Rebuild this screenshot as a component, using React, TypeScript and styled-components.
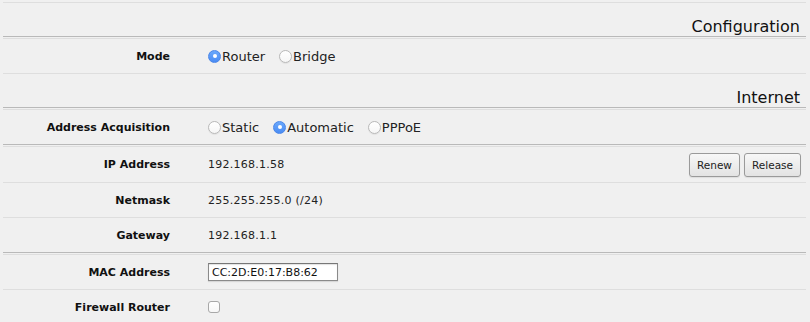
import React from "react";
import styled, { createGlobalStyle } from "styled-components";

const Global = createGlobalStyle`
  html, body { margin: 0; padding: 0; background: #f0f0f0; }
  body { font-family: "DejaVu Sans", Verdana, sans-serif; font-size: 11px; color: #111; }
`;

const Page = styled.div`
  padding: 2px 4px 0 3px;
  width: 100%;
  box-sizing: border-box;
`;

const Heading = styled.div`
  border-top: 1px solid #dedede;
  border-bottom: 1px solid #b9b9b9;
  margin-bottom: 1px;
  height: 33px;
  display: flex;
  justify-content: flex-end;
  align-items: flex-end;
  padding-right: 6px;
  font-size: 16px;
  line-height: 19px;
  color: #111;
`;

const Row = styled.div<{ $h?: number; $groupEnd?: boolean }>`
  border-top: 1px solid #dedede;
  ${(p) => (p.$groupEnd ? "border-bottom: 1px solid #b9b9b9; margin-bottom: 1px;" : "")}
  height: ${(p) => p.$h ?? 34}px;
  display: grid;
  grid-template-columns: 167px 1fr auto;
  column-gap: 38px;
  align-items: center;
`;

const Label = styled.div`
  font-weight: bold;
  text-align: right;
  color: #111;
`;

const Value = styled.div`
  display: flex;
  align-items: center;
  color: #222;
  letter-spacing: 0.25px;
`;

const RadioOpt = styled.label`
  display: inline-flex;
  align-items: center;
  margin-right: 14px;
  color: #222;
  font-size: 13px;
  letter-spacing: 0;
`;

const RadioDot = styled.span<{ $on?: boolean }>`
  width: 13px;
  height: 13px;
  box-sizing: border-box;
  border-radius: 50%;
  display: inline-flex;
  align-items: center;
  justify-content: center;
  margin-right: 1px;
  ${(p) =>
    p.$on
      ? `background: linear-gradient(#6aa8fb, #4a8cf4); border: 1px solid #4a86e8;`
      : `background: linear-gradient(#ffffff, #f6f6f6); border: 1px solid #b8b8b8; box-shadow: 0 1px 1px rgba(0,0,0,0.06);`}
  &::after {
    content: "";
    width: 4px;
    height: 4px;
    border-radius: 50%;
    background: #fff;
    display: ${(p) => (p.$on ? "block" : "none")};
  }
`;

const Buttons = styled.div`
  display: flex;
  gap: 4px;
  padding-right: 5px;
`;

const Button = styled.button`
  height: 24px;
  box-sizing: border-box;
  padding: 0 7px;
  font-family: "DejaVu Sans", Verdana, sans-serif;
  font-size: 10.5px;
  color: #222;
  background: linear-gradient(#f7f7f7, #e3e3e3);
  border: 1px solid #9a9a9a;
  border-radius: 3px;
  box-shadow: 0 1px 1px rgba(0, 0, 0, 0.08);
`;

const TextInput = styled.input`
  width: 130px;
  height: 18px;
  box-sizing: border-box;
  padding: 0 3px;
  font-family: "DejaVu Sans", Verdana, sans-serif;
  font-size: 11px;
  color: #111;
  background: #fff;
  border: 1px solid #8a8a8a;
  border-top-color: #777;
  box-shadow: inset 0 1px 1px rgba(0, 0, 0, 0.12), 0 1px 1px rgba(0,0,0,0.1);
  outline: none;
`;

const Check = styled.span`
  width: 12px;
  height: 12px;
  box-sizing: border-box;
  border: 1px solid #a8a8a8;
  border-radius: 3px;
  background: linear-gradient(#ffffff, #f7f7f7);
  display: inline-block;
`;

const Radio = ({ on, children }: { on?: boolean; children: React.ReactNode }) => (
  <RadioOpt>
    <RadioDot $on={on} />
    {children}
  </RadioOpt>
);

export default function App() {
  return (
    <>
      <Global />
      <Page>
        <Heading>Configuration</Heading>
        <Row>
          <Label>Mode</Label>
          <Value>
            <Radio on>Router</Radio>
            <Radio>Bridge</Radio>
          </Value>
        </Row>
        <Heading>Internet</Heading>
        <Row $groupEnd>
          <Label>Address Acquisition</Label>
          <Value>
            <Radio>Static</Radio>
            <Radio on>Automatic</Radio>
            <Radio>PPPoE</Radio>
          </Value>
        </Row>
        <Row $h={35}>
          <Label>IP Address</Label>
          <Value>192.168.1.58</Value>
          <Buttons>
            <Button>Renew</Button>
            <Button>Release</Button>
          </Buttons>
        </Row>
        <Row>
          <Label>Netmask</Label>
          <Value>255.255.255.0 (/24)</Value>
        </Row>
        <Row $groupEnd>
          <Label>Gateway</Label>
          <Value>192.168.1.1</Value>
        </Row>
        <Row>
          <Label>MAC Address</Label>
          <Value>
            <TextInput defaultValue="CC:2D:E0:17:B8:62" />
          </Value>
        </Row>
        <Row>
          <Label>Firewall Router</Label>
          <Value>
            <Check />
          </Value>
        </Row>
      </Page>
    </>
  );
}
